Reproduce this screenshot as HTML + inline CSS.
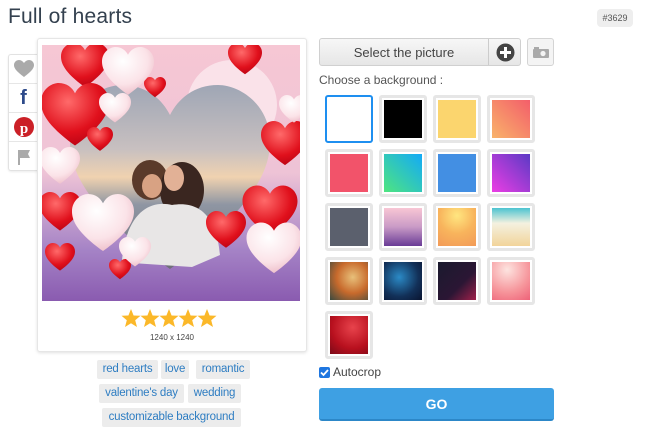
<!DOCTYPE html>
<html><head><meta charset="utf-8"><style>
*{box-sizing:border-box;margin:0;padding:0}
body{width:650px;height:430px;background:#fff;font-family:"Liberation Sans",sans-serif;position:relative;overflow:hidden;color:#444}
.abs{position:absolute}
h1{position:absolute;left:8px;top:5px;font-size:21px;font-weight:normal;color:#34414f;letter-spacing:0.2px}
.badge{left:597px;top:9px;width:36px;height:18px;background:#eee;border-radius:4px;font-size:9px;color:#555;text-align:center;line-height:18px}
.side{left:8px;top:54px;width:30px;height:117px;border:1px solid #e2e2e2;border-right:none;border-radius:3px 0 0 3px;background:#fff;box-shadow:0 1px 2px rgba(0,0,0,.08)}
.side div{height:29px;border-bottom:1px solid #e6e6e6;display:flex;align-items:center;justify-content:center}
.card{left:37px;top:38px;width:270px;height:314px;border:1px solid #e6e6e6;border-radius:3px;box-shadow:0 1px 3px rgba(0,0,0,.12);background:#fff}
.tag{position:absolute;height:19px;background:#ececec;border-radius:2px;color:#2e7dc2;font-size:11.5px;line-height:19px;text-align:center;white-space:nowrap;letter-spacing:-0.2px}
.btn{left:319px;top:38px;width:202px;height:28px;border:1px solid #d0d0d0;border-radius:3px;background:linear-gradient(#f7f7f7,#e6e6e6);font-size:13px;color:#444;line-height:27px}
.cam{left:527px;top:38px;width:27px;height:28px;border:1px solid #d4d4d4;border-radius:3px;background:#f4f4f4}
.sw{position:absolute;width:48px;height:48px;border:3px solid #e6e6e6;border-radius:3px;background-clip:padding-box}
.sw i{position:absolute;left:2px;top:2px;right:2px;bottom:2px}
.go{left:319px;top:388px;width:235px;height:33px;background:#3ea0e3;border-radius:3px;color:#fff;font-weight:bold;font-size:14px;text-align:center;line-height:33px;border-bottom:2px solid #2c87c8}
</style></head><body>
<h1>Full of hearts</h1>
<div class="abs badge">#3629</div>

<div class="abs side">
<div><svg width="20" height="18" viewBox="0 0 20 18"><path d="M10 17 C2 11 0 8 0 5 C0 2 2.5 0 5 0 C7 0 9 1.5 10 3 C11 1.5 13 0 15 0 C17.5 0 20 2 20 5 C20 8 18 11 10 17Z" fill="#aaa"/></svg></div>
<div><span style="font-weight:bold;font-size:20px;color:#2d4a8a;font-family:'Liberation Sans'">f</span></div>
<div><svg width="20" height="20" viewBox="0 0 20 20"><circle cx="10" cy="10" r="10" fill="#cb2027"/><text x="10" y="16" font-size="15" font-weight="bold" fill="#fff" text-anchor="middle" font-family="Liberation Serif">p</text></svg></div>
<div style="border:none"><svg width="14" height="16" viewBox="0 0 14 16"><rect x="1" y="1" width="2" height="15" fill="#aaa"/><path d="M3 1 H13 L11 5 L13 9 H3Z" fill="#aaa"/></svg></div>
</div>

<div class="abs card"></div>
<svg class="abs" style="left:42px;top:45px" width="258" height="256" viewBox="0 0 258 256">
<defs>
<linearGradient id="bg" x1="0" y1="0" x2="0" y2="1"><stop offset="0" stop-color="#f6c7d4"/><stop offset="0.5" stop-color="#eec3d6"/><stop offset="0.8" stop-color="#a583c6"/><stop offset="1" stop-color="#8a5bb0"/></linearGradient>
<linearGradient id="sky" x1="0" y1="0" x2="0" y2="1"><stop offset="0" stop-color="#9fa6b5"/><stop offset="0.35" stop-color="#c8c0c0"/><stop offset="0.5" stop-color="#f0d2b0"/><stop offset="0.65" stop-color="#8f96a3"/><stop offset="1" stop-color="#6e6e78"/></linearGradient>
<radialGradient id="rh" cx="0.4" cy="0.3" r="0.8"><stop offset="0" stop-color="#ff6a6a"/><stop offset="0.6" stop-color="#e0101c"/><stop offset="1" stop-color="#b00012"/></radialGradient>
<radialGradient id="wh" cx="0.4" cy="0.3" r="0.8"><stop offset="0" stop-color="#fff"/><stop offset="0.6" stop-color="#fbe3e8"/><stop offset="1" stop-color="#eab4c1"/></radialGradient>
<path id="h" d="M0 0.42 C-0.45 0.1 -0.5 -0.1 -0.5 -0.22 C-0.5 -0.4 -0.35 -0.5 -0.24 -0.5 C-0.12 -0.5 -0.04 -0.43 0 -0.35 C0.04 -0.43 0.12 -0.5 0.24 -0.5 C0.35 -0.5 0.5 -0.4 0.5 -0.22 C0.5 -0.1 0.45 0.1 0 0.42Z"/>
</defs>
<rect width="258" height="256" fill="url(#bg)"/>
<circle cx="190" cy="60" r="45" fill="#fbe8ee" opacity=".8"/>
<g transform="translate(128,140) scale(200)"><use href="#h" fill="url(#sky)"/></g>
<ellipse cx="108" cy="135" rx="18" ry="20" fill="#5a3a2a"/>
<ellipse cx="140" cy="145" rx="22" ry="28" fill="#3a2620"/>
<ellipse cx="132" cy="133" rx="10" ry="13" fill="#e2b196"/>
<ellipse cx="110" cy="141" rx="10" ry="12" fill="#d8a283"/>
<path d="M80 215 C85 165 110 155 130 160 C160 155 175 175 178 210 L150 222 L90 218Z" fill="#e8e6e6"/>
<g fill="url(#rh)">
<use href="#h" transform="translate(43,22) scale(48)"/>
<use href="#h" transform="translate(113,43) scale(22)"/>
<use href="#h" transform="translate(203,15) scale(34)"/>
<use href="#h" transform="translate(33,72) scale(68)"/>
<use href="#h" transform="translate(58,95) scale(26)"/>
<use href="#h" transform="translate(243,100) scale(48)"/>
<use href="#h" transform="translate(228,168) scale(55)"/>
<use href="#h" transform="translate(18,168) scale(42)"/>
<use href="#h" transform="translate(18,213) scale(30)"/>
<use href="#h" transform="translate(78,225) scale(22)"/>
<use href="#h" transform="translate(184,186) scale(40)"/>
</g>
<g fill="url(#wh)">
<use href="#h" transform="translate(86,28) scale(52)"/>
<use href="#h" transform="translate(73,64) scale(32)"/>
<use href="#h" transform="translate(18,122) scale(40)"/>
<use href="#h" transform="translate(61,180) scale(62)"/>
<use href="#h" transform="translate(93,208) scale(32)"/>
<use href="#h" transform="translate(232,205) scale(55)"/>
<use href="#h" transform="translate(252,65) scale(30)"/>
</g>
</svg>
<svg class="abs" style="left:121px;top:308px" width="100" height="22" viewBox="0 0 100 22">
<g fill="#fbb829">
<polygon id="st" points="10,1 12.6,7.5 19.5,7.8 14.2,12.2 16,19 10,15.2 4,19 5.8,12.2 0.5,7.8 7.4,7.5"/>
<use href="#st" x="19"/><use href="#st" x="38"/><use href="#st" x="57"/><use href="#st" x="76"/>
</g>
</svg>
<div class="abs" style="left:37px;top:333px;width:270px;text-align:center;font-size:8px;color:#444">1240 x 1240</div>

<div class="tag" style="left:97px;top:360px;width:61px">red hearts</div>
<div class="tag" style="left:161px;top:360px;width:28px">love</div>
<div class="tag" style="left:196px;top:360px;width:54px">romantic</div>
<div class="tag" style="left:99px;top:384px;width:85px">valentine's day</div>
<div class="tag" style="left:188px;top:384px;width:53px">wedding</div>
<div class="tag" style="left:102px;top:408px;width:139px">customizable background</div>

<div class="abs btn"><span style="position:absolute;left:0;width:168px;text-align:center">Select the picture</span><div style="position:absolute;left:168px;top:0;width:1px;height:26px;background:#ccc"></div>
<svg style="position:absolute;left:176px;top:4px" width="19" height="19" viewBox="0 0 19 19"><circle cx="9.5" cy="9.5" r="9" fill="#444"/><rect x="8" y="4" width="3" height="11" fill="#fff"/><rect x="4" y="8" width="11" height="3" fill="#fff"/></svg></div>
<div class="abs cam"><svg style="position:absolute;left:5px;top:8px" width="16" height="11" viewBox="0 0 16 11"><rect x="0" y="2" width="16" height="9" rx="1" fill="#aaa"/><rect x="1" y="0" width="5" height="3" fill="#aaa"/><circle cx="10" cy="6.5" r="2.6" fill="#f4f4f4"/></svg></div>
<div class="abs" style="left:319px;top:73px;font-size:12px;color:#555">Choose a background :</div>

<div class="sw" style="left:325px;top:95px;border:2px solid #1e8ff0;background:#fff"></div>
<div class="sw" style="left:379px;top:95px"><i style="background:#000"></i></div>
<div class="sw" style="left:433px;top:95px"><i style="background:#fbd56e"></i></div>
<div class="sw" style="left:487px;top:95px"><i style="background:linear-gradient(45deg,#f9b36a,#f35e6a)"></i></div>
<div class="sw" style="left:325px;top:149px"><i style="background:#f2536a"></i></div>
<div class="sw" style="left:379px;top:149px"><i style="background:linear-gradient(45deg,#4fe57f,#13aaf7)"></i></div>
<div class="sw" style="left:433px;top:149px"><i style="background:#438fe3"></i></div>
<div class="sw" style="left:487px;top:149px"><i style="background:linear-gradient(45deg,#ec3ee4,#5a3ac5)"></i></div>
<div class="sw" style="left:325px;top:203px"><i style="background:#5b606d"></i></div>
<div class="sw" style="left:379px;top:203px"><i style="background:linear-gradient(#f8c6d4,#c99ac6,#6a3c96)"></i></div>
<div class="sw" style="left:433px;top:203px"><i style="background:radial-gradient(circle at 50% 20%,#ffe680,#f8b45c 50%,#f29a58)"></i></div>
<div class="sw" style="left:487px;top:203px"><i style="background:linear-gradient(#4cc4d0,#f4f1e0 40%,#f2d49a)"></i></div>
<div class="sw" style="left:325px;top:257px"><i style="background:radial-gradient(circle at 60% 40%,#e8c07a,#c86a2c 50%,#3a4a40)"></i></div>
<div class="sw" style="left:379px;top:257px"><i style="background:radial-gradient(circle at 40% 40%,#2b8ac6,#123058 60%,#0a1430)"></i></div>
<div class="sw" style="left:433px;top:257px"><i style="background:linear-gradient(135deg,#1a1a2e,#2b1634 60%,#a0204a)"></i></div>
<div class="sw" style="left:487px;top:257px"><i style="background:radial-gradient(circle at 40% 20%,#fde4e0,#f6949a 60%,#ee6278)"></i></div>
<div class="sw" style="left:325px;top:311px"><i style="background:radial-gradient(circle at 60% 30%,#e8434c,#b8101e 60%,#7a0a18)"></i></div>

<div class="abs" style="left:319px;top:367px;width:11px;height:11px;background:#1e76e0;border-radius:2px"><svg width="11" height="11" viewBox="0 0 11 11" style="position:absolute;left:0;top:0"><path d="M2 5.5 L4.5 8 L9 3" stroke="#fff" stroke-width="1.8" fill="none"/></svg></div>
<div class="abs" style="left:333px;top:365px;font-size:12px;color:#444">Autocrop</div>
<div class="abs go">GO</div>
</body></html>
